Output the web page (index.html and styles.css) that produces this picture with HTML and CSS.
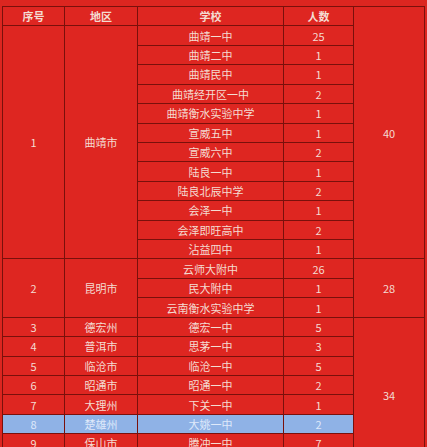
FILE: index.html
```html
<!DOCTYPE html>
<html lang="zh">
<head>
<meta charset="utf-8">
<title>统计表</title>
<link rel="stylesheet" href="styles.css">
</head>
<body>
<table class="tbl">
  <colgroup>
    <col class="c1"><col class="c2"><col class="c3"><col class="c4"><col class="c5">
  </colgroup>
  <tr class="head">
    <th>序号</th><th>地区</th><th>学校</th><th>人数</th>
    <td rowspan="13" class="total">40</td>
  </tr>
  <tr><td rowspan="12">1</td><td rowspan="12">曲靖市</td><td>曲靖一中</td><td>25</td></tr>
  <tr><td>曲靖二中</td><td>1</td></tr>
  <tr><td>曲靖民中</td><td>1</td></tr>
  <tr><td>曲靖经开区一中</td><td>2</td></tr>
  <tr><td>曲靖衡水实验中学</td><td>1</td></tr>
  <tr><td>宣威五中</td><td>1</td></tr>
  <tr><td>宣威六中</td><td>2</td></tr>
  <tr><td>陆良一中</td><td>1</td></tr>
  <tr><td>陆良北辰中学</td><td>2</td></tr>
  <tr><td>会泽一中</td><td>1</td></tr>
  <tr><td>会泽即旺高中</td><td>2</td></tr>
  <tr><td>沾益四中</td><td>1</td></tr>
  <tr><td rowspan="3">2</td><td rowspan="3">昆明市</td><td>云师大附中</td><td>26</td><td rowspan="3" class="total">28</td></tr>
  <tr><td>民大附中</td><td>1</td></tr>
  <tr><td>云南衡水实验中学</td><td>1</td></tr>
  <tr><td>3</td><td>德宏州</td><td>德宏一中</td><td>5</td><td rowspan="8" class="total">34</td></tr>
  <tr><td>4</td><td>普洱市</td><td>思茅一中</td><td>3</td></tr>
  <tr><td>5</td><td>临沧市</td><td>临沧一中</td><td>5</td></tr>
  <tr><td>6</td><td>昭通市</td><td>昭通一中</td><td>2</td></tr>
  <tr><td>7</td><td>大理州</td><td>下关一中</td><td>1</td></tr>
  <tr class="hl"><td>8</td><td>楚雄州</td><td>大姚一中</td><td>2</td></tr>
  <tr><td>9</td><td>保山市</td><td>腾冲一中</td><td>7</td></tr>
  <tr><td>10</td><td>丽江市</td><td>丽江一中</td><td>9</td></tr>
</table>
</body>
</html>
```
FILE: styles.css
```css
html, body {
  margin: 0;
  padding: 0;
  background: #dc2620;
  overflow: hidden;
}
body {
  padding: 6px 0 0 2px;
  font-family: "Noto Sans CJK SC", "Liberation Sans", sans-serif;
}
.tbl {
  border-collapse: collapse;
  table-layout: fixed;
  width: 422px;
  background: #de2621;
  color: #f4dcd2;
  font-size: 11px;
}
.c1 { width: 62px; }
.c2 { width: 73px; }
.c3 { width: 146px; }
.c4 { width: 70px; }
.c5 { width: 71px; }
.tbl tr { height: 19.43px; }
.tbl th, .tbl td {
  border: 1px solid #7a100b;
  text-align: center;
  vertical-align: middle;
  padding: 0;
  line-height: 14px;
  white-space: nowrap;
  overflow: hidden;
}
.tbl th {
  font-weight: bold;
}
.tbl .hl td {
  background: #8fb2e6;
  color: #dfe9fa;
}
```
